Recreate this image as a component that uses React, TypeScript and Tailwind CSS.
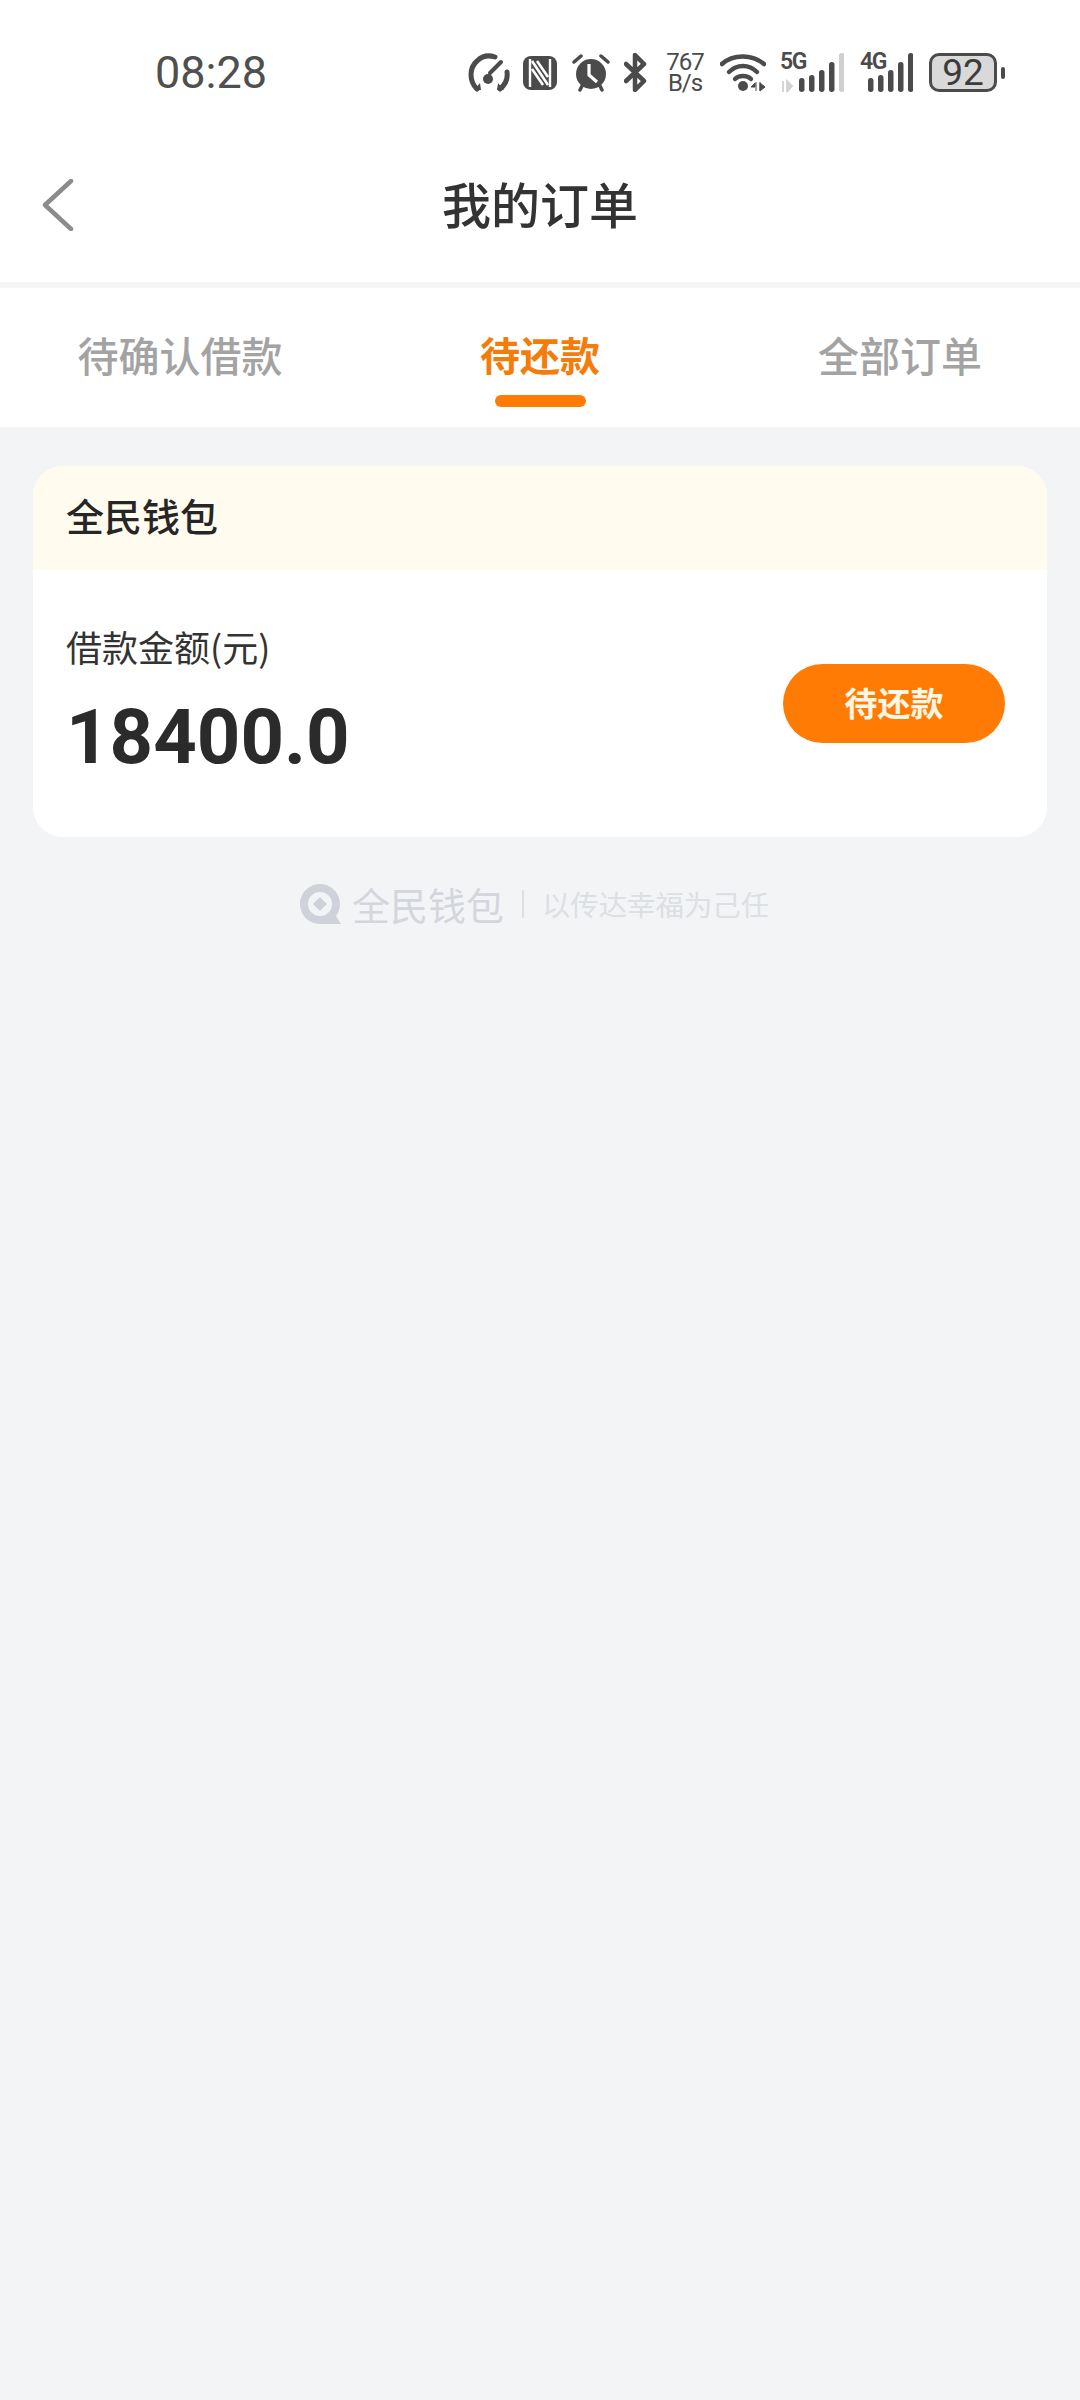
import React from "react";

const cjk = { fontFamily: '"Noto Sans CJK SC", "Noto Sans", sans-serif' };
const ink = "#4b4b4b";

function Speed() {
  return (
    <svg width="42" height="39" viewBox="0 0 42 39" fill="none">
      <path d="M9 36 C1 28 1 15 9 8 C14 3 21 2 27 4" stroke={ink} strokeWidth="5" strokeLinecap="round" />
      <path d="M39 19 C40 26 37 32 32 36" stroke={ink} strokeWidth="5" strokeLinecap="round" />
      <path d="M6 37 L12 30 L13 37 Z M36 37 L30 30 L29 37 Z" fill={ink} />
      <path d="M33 9 L22 20" stroke={ink} strokeWidth="4" strokeLinecap="round" />
      <circle cx="20" cy="26" r="5" fill={ink} />
    </svg>
  );
}
function Nfc() {
  return (
    <svg width="34" height="34" viewBox="0 0 34 34">
      <rect x="0" y="0" width="34" height="34" rx="8" fill={ink} />
      <path d="M9 5 L25 29 M9 13 L20 29 M14 5 L25 21" stroke="#fff" strokeWidth="2.6" fill="none" />
      <path d="M7 3 V31 M27 3 V31" stroke="#fff" strokeWidth="2.4" />
    </svg>
  );
}
function Alarm() {
  return (
    <svg width="38" height="39" viewBox="0 0 38 39" fill="none">
      <circle cx="19" cy="21" r="15" fill={ink} />
      <path d="M2 9 L9 3 M36 9 L29 3 M8 37 L10 33 M30 37 L28 33" stroke={ink} strokeWidth="3.5" strokeLinecap="round" />
      <path d="M17 11 V22 L25 29" stroke="#fff" strokeWidth="3.2" />
    </svg>
  );
}
function Bt() {
  return (
    <svg width="23" height="39" viewBox="0 0 23 39" fill="none">
      <path d="M2 11 L20 28 L11 37 V2 L20 11 L2 28" stroke={ink} strokeWidth="4.5" strokeLinejoin="round" strokeLinecap="round" />
    </svg>
  );
}
function Wifi() {
  return (
    <svg width="46" height="39" viewBox="0 0 46 39" fill="none">
      <path d="M2 11 C13 1 32 1 44 11" stroke={ink} strokeWidth="4.5" strokeLinecap="round" />
      <path d="M9 19 C17 11 29 11 37 19" stroke={ink} strokeWidth="4.5" strokeLinecap="round" />
      <path d="M15 26 C19 22 27 22 31 26" stroke={ink} strokeWidth="4.5" strokeLinecap="round" />
      <circle cx="23" cy="33" r="5" fill={ink} />
      <path d="M35 30 L31 34 H35 Z M36 29 V38 M40 29 V38 M40 30 V38 L45 34 Z" fill={ink} stroke={ink} strokeWidth="1" />
    </svg>
  );
}
function Signal({ label, offset, width, lastOff, arrows }: { label: string; offset: number; width: number; lastOff?: boolean; arrows?: boolean }) {
  const bars = [
    [0, 25, 14],
    [10, 22, 17],
    [20, 17, 22],
    [30, 9, 30],
    [40, 0, 39],
  ];
  return (
    <div className="relative h-[39px]" style={{ width }}>
      <svg width={width} height="39" viewBox={`0 0 ${width} 39`} className="absolute left-0 top-0">
        {bars.map(([x, y, h], i) => (
          <rect key={i} x={x + offset} y={y} width="5.5" height={h} rx="2.7" fill={lastOff && i === 4 ? "#cfcfcf" : ink} />
        ))}
        {arrows && <path d="M3 28 V39 M7 28 V39 L12 33 Z" stroke="#d2d2d2" strokeWidth="1.8" fill="#d2d2d2" />}
      </svg>
      <span
        className="absolute left-0 top-[-3px] text-[23px] leading-[24px] font-semibold text-[#4b4b4b] tracking-[-1.5px]"
        style={{ fontFamily: 'Roboto, "Noto Sans", sans-serif' }}
      >
        {label}
      </span>
    </div>
  );
}
function Battery() {
  return (
    <div className="flex items-center">
      <div
        className="w-[68px] h-[39px] rounded-[10px] border-[3px] border-[#4b4b4b] bg-[#d9d9d9] flex items-center justify-center text-[37px] leading-none text-[#3c3c3c]"
        style={{ fontFamily: 'Roboto, sans-serif' }}
      >
        92
      </div>
      <div className="ml-[4px] w-[4px] h-[12px] rounded-full bg-[#4b4b4b]" />
    </div>
  );
}

function BackIcon() {
  return (
    <svg width="32" height="52" viewBox="0 0 32 52" fill="none">
      <path d="M29 2 L3 26 L29 50" stroke="#8c8c8c" strokeWidth="4.5" strokeLinecap="round" strokeLinejoin="round" />
    </svg>
  );
}

function LogoMark() {
  return (
    <svg width="41" height="40" viewBox="0 0 41 40">
      <path d="M20 0 C31 0 40 9 40 20 C40 25 38 29 36 32 L41 40 H20 C9 40 0 31 0 20 C0 9 9 0 20 0 Z" fill="#cfd2d8" />
      <circle cx="20" cy="20" r="12" fill="#f3f4f6" />
      <rect x="15" y="15" width="10" height="10" transform="rotate(45 20 20)" fill="#cfd2d8" />
    </svg>
  );
}

export default function App() {
  return (
    <div className="w-[1080px] h-[2400px] bg-[#f3f4f6] flex flex-col" style={cjk}>
      <div className="bg-white h-[130px] pt-[53px] pl-[155px] pr-[75px] flex items-start">
        <span className="text-[45px] leading-[40px] text-[#4f4f4f]" style={{ fontFamily: 'Roboto, sans-serif' }}>
          08:28
        </span>
        <div className="ml-auto flex items-start">
          <Speed />
          <div className="ml-[13px] mt-[3px]"><Nfc /></div>
          <div className="ml-[15px]"><Alarm /></div>
          <div className="ml-[14px]"><Bt /></div>
          <div
            className="ml-[19px] w-[38px] text-[24px] leading-[21px] text-[#4b4b4b] text-center -mt-[1px]"
            style={{ fontFamily: 'Roboto, sans-serif' }}
          >
            <div className="tracking-[-1px]">767</div>
            <div className="tracking-[-1px]">B/s</div>
          </div>
          <div className="ml-[16px]"><Wifi /></div>
          <div className="ml-[14px]"><Signal label="5G" offset={19} width={64} lastOff arrows /></div>
          <div className="ml-[16px]"><Signal label="4G" offset={8} width={53} /></div>
          <div className="ml-[16px]"><Battery /></div>
        </div>
      </div>

      <div className="bg-white h-[158px] flex items-center relative border-b-[6px] border-[#f6f6f6]">
        <div className="absolute left-[42px] top-[49px]"><BackIcon /></div>
        <div className="w-full text-center text-[49px] leading-[64px] font-medium text-[#333333] pb-[7px]">我的订单</div>
      </div>

      <div className="bg-white h-[139px] grid grid-cols-3">
        <div className="flex flex-col items-center pt-[38px]">
          <span className="text-[41px] leading-[56px] font-medium text-[#a3a3a3]">待确认借款</span>
        </div>
        <div className="flex flex-col items-center pt-[38px]">
          <span className="text-[40px] leading-[56px] font-bold text-[#f57c0a]">待还款</span>
          <span className="mt-[13px] w-[91px] h-[12px] rounded-full bg-[#ff7b04]" />
        </div>
        <div className="flex flex-col items-center pt-[38px]">
          <span className="text-[41px] leading-[56px] font-medium text-[#a3a3a3]">全部订单</span>
        </div>
      </div>

      <div className="mx-[33px] mt-[39px] rounded-[30px] bg-white overflow-hidden">
        <div className="h-[104px] bg-[#fffbee] pl-[33px] pb-[8px] flex items-center text-[38px] font-medium text-[#262626]">
          全民钱包
        </div>
        <div className="h-[267px] flex items-center justify-between pl-[33px] pr-[42px]">
          <div className="self-start pt-[51px]">
            <div className="text-[36px] leading-[50px] text-[#333333]">借款金额(元)</div>
            <div
              className="mt-[26px] text-[76px] leading-[80px] font-bold text-[#2b2b2b]"
              style={{ fontFamily: 'Roboto, sans-serif' }}
            >
              18400.0
            </div>
          </div>
          <div className="w-[222px] h-[79px] rounded-full bg-[#ff7b04] pb-[2px] flex items-center justify-center text-[33px] font-bold text-[#fff6e5]">
            待还款
          </div>
        </div>
      </div>

      <div className="mt-[47px] pr-[11px] flex items-center justify-center">
        <LogoMark />
        <span className="ml-[11px] text-[38px] leading-[40px] font-normal text-[#d3d6dc]">全民钱包</span>
        <span className="ml-[18px] w-[2px] h-[28px] bg-[#dcdfe4]" />
        <span className="ml-[18px] text-[28.4px] leading-[40px] text-[#dcdfe4]">以传达幸福为己任</span>
      </div>
    </div>
  );
}
